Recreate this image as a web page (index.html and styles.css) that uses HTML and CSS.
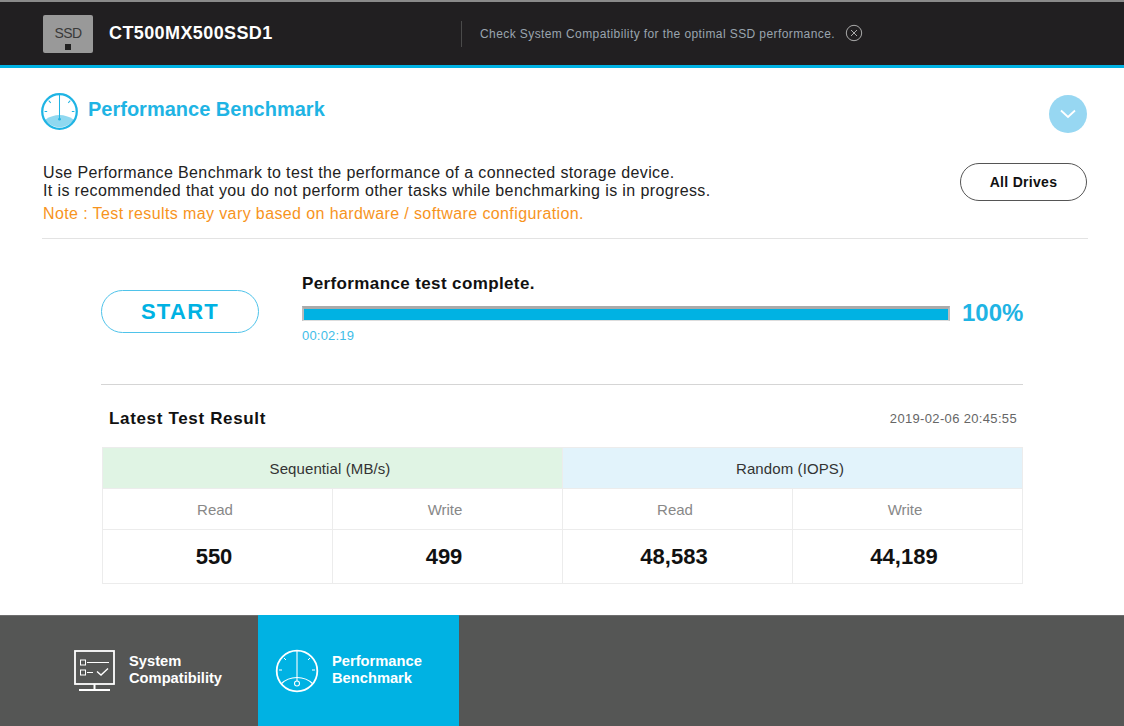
FILE: index.html
```html
<!DOCTYPE html>
<html lang="en">
<head>
<meta charset="utf-8">
<title>Performance Benchmark</title>
<link rel="stylesheet" href="styles.css">
</head>
<body>
<div class="app">
  <header class="topbar">
    <div class="ssd-badge"><span class="ssd-label">SSD</span><span class="ssd-dot"></span></div>
    <div class="model">CT500MX500SSD1</div>
    <div class="divider"></div>
    <div class="notice">Check System Compatibility for the optimal SSD performance.</div>
    <svg class="notice-close" width="18" height="18" viewBox="0 0 18 18" fill="none" stroke="#aaaaaa" stroke-width="1">
      <circle cx="9" cy="9" r="7.7"/><path d="M6 6l6 6M12 6l-6 6"/>
    </svg>
  </header>

  <main class="content">
    <section class="intro">
      <div class="title-row">
        <svg class="title-icon" width="37" height="37" viewBox="0 0 36 36" fill="none" stroke="#1fb4e4">
          <path d="M4 26Q18 17 32 26A17 17 0 0 1 4 26Z" fill="#8fd8f0" stroke="none"/>
          <circle cx="18" cy="18" r="16.800" stroke-width="2.200"/>
          <path d="M18 2v23M6 18H3.500M30 18h2.500M7.500 7.500l2 2M28.500 7.500l-2 2" stroke-width="1"/>
          <circle cx="18" cy="25.500" r="1.300" fill="#1fb4e4" stroke="none"/>
        </svg>
        <h1 class="title">Performance Benchmark</h1>
        <div class="collapse">
          <svg width="18" height="10" viewBox="0 0 18 10" fill="none" stroke="#ffffff" stroke-width="1.800"><path d="M2 1.500l7 6.500 7-6.500"/></svg>
        </div>
      </div>
      <div class="desc-row">
        <div class="desc">
          <p class="desc-line">Use Performance Benchmark to test the performance of a connected storage device.</p>
          <p class="desc-line">It is recommended that you do not perform other tasks while benchmarking is in progress.</p>
          <p class="note">Note : Test results may vary based on hardware / software configuration.</p>
        </div>
        <button class="all-drives">All Drives</button>
      </div>
    </section>

    <section class="test">
      <div class="run-row">
        <button class="start">START</button>
        <div class="progress-block">
          <div class="status">Performance test complete.</div>
          <div class="bar-row">
            <div class="bar"><div class="bar-fill"></div></div>
            <div class="percent">100%</div>
          </div>
          <div class="elapsed">00:02:19</div>
        </div>
      </div>

      <div class="result-head">
        <div class="result-title">Latest Test Result</div>
        <div class="result-date">2019-02-06 20:45:55</div>
      </div>

      <div class="grid">
        <div class="cell group seq">Sequential (MB/s)</div>
        <div class="cell group rnd">Random (IOPS)</div>
        <div class="cell label">Read</div>
        <div class="cell label">Write</div>
        <div class="cell label">Read</div>
        <div class="cell label">Write</div>
        <div class="cell value">550</div>
        <div class="cell value">499</div>
        <div class="cell value">48,583</div>
        <div class="cell value">44,189</div>
      </div>
    </section>
  </main>

  <footer class="tabs">
    <div class="tab tab-system">
      <svg class="tab-icon-sys" width="42" height="42" viewBox="0 0 42 42" fill="none" stroke="#ffffff">
        <rect x="1" y="1" width="39" height="33" stroke-width="1.800"/>
        <rect x="6.500" y="10" width="5" height="5" stroke-width="1"/>
        <rect x="6.500" y="20" width="5" height="5" stroke-width="1"/>
        <path d="M13 12.500h22M13 22.500h6" stroke-width="1"/>
        <path d="M23 21.500l4 3.500 7-6.500" stroke-width="1.400"/>
        <path d="M20.500 34v5M5 40h31" stroke-width="2"/>
      </svg>
      <div class="tab-text">System<br>Compatibility</div>
    </div>
    <div class="tab tab-active">
      <svg class="tab-icon-perf" width="44" height="44" viewBox="0 0 44 44" fill="none" stroke="#ffffff">
        <circle cx="22" cy="22" r="20.300" stroke-width="1.800"/>
        <path d="M22 2v30" stroke-width="1.100"/>
        <path d="M4 21h3M37 21h3M9 9l2 2M35 9l-2 2" stroke-width="1"/>
        <path d="M6 35C10.500 30.500 16 28.500 22 28.500S33.500 30.500 38 35" stroke-width="1.200"/>
        <circle cx="22" cy="34.500" r="2.500" stroke-width="1.100"/>
      </svg>
      <div class="tab-text">Performance<br>Benchmark</div>
    </div>
  </footer>
</div>
</body>
</html>
```
FILE: styles.css
```css
* { box-sizing: border-box; }
html, body { margin: 0; padding: 0; background: #ffffff; }
body { font-family: "Liberation Sans", Arial, sans-serif; color: #111111; }
p, h1 { margin: 0; }
button { font-family: inherit; background: #ffffff; padding: 0; }

.app { width: 1124px; height: 726px; display: flex; flex-direction: column; overflow: hidden; }

.topbar {
  height: 68px; flex: none; display: flex; align-items: center;
  background: #211f21; border-top: 2px solid #8a8a8a; border-bottom: 3px solid #00b2e3;
  padding: 0 0 0 43px;
}
.ssd-badge {
  width: 50px; height: 38px; background: #999999; border-radius: 2px;
  display: flex; flex-direction: column; align-items: center; flex: none;
}
.ssd-label { font-size: 14px; color: #3a3a3a; margin-top: 11px; line-height: 14px; letter-spacing: -0.6px; }
.ssd-dot { width: 6px; height: 6px; background: #222222; margin-top: 4px; }
.model { font-size: 18px; font-weight: bold; color: #ffffff; margin-left: 16px; width: 352px; letter-spacing: 0.4px; }
.divider { width: 1px; height: 26px; background: #4a4a4a; flex: none; }
.notice { font-size: 12px; color: #9aa4ae; margin-left: 18px; letter-spacing: 0.41px; margin-top: 1px; }
.notice-close { margin-left: 10px; flex: none; margin-top: -1px; }

.content { flex: 1; display: flex; flex-direction: column; padding: 0 36px 0 42px; }

.intro { height: 171px; border-bottom: 1px solid #e3e3e3; display: flex; flex-direction: column; }
.title-row { display: flex; align-items: center; padding-top: 24px; height: 62px; }
.title-icon { flex: none; margin-left: -1px; }
.title { font-size: 20px; font-weight: bold; color: #1fb4e4; margin-left: 10px; flex: 1; margin-top: -4px; }
.collapse {
  width: 38px; height: 38px; border-radius: 50%; background: #97d7f2; flex: none; margin-right: 1px; margin-top: 5px;
  display: flex; align-items: center; justify-content: center;
}
.desc-row { display: flex; justify-content: space-between; padding: 34px 0 0 1px; }
.desc-line { font-size: 16px; line-height: 18px; color: #222222; letter-spacing: 0.38px; }
.note { font-size: 16px; line-height: 18px; color: #f7941d; margin-top: 5px; letter-spacing: 0.39px; }
.all-drives {
  width: 127px; height: 38px; border: 1.500px solid #555555; border-radius: 19px; margin: -1px 1px 0 0;
  font-size: 14px; font-weight: bold; color: #111111; letter-spacing: 0.3px;
}

.test { padding: 0 65px 0 59px; display: flex; flex-direction: column; }
.run-row { display: flex; height: 146px; border-bottom: 1px solid #d5d5d5; }
.start {
  width: 158px; height: 43px; border: 1.500px solid #4fc3ea; border-radius: 22px; margin-top: 51px; flex: none;
  font-size: 22px; font-weight: bold; color: #00b2e3; letter-spacing: 1.300px;
}
.progress-block { margin-left: 43px; flex: 1; min-width: 0; }
.status { font-size: 17px; font-weight: bold; color: #111111; margin-top: 36px; line-height: 18px; letter-spacing: 0.38px; }
.bar-row { display: flex; align-items: center; margin-top: 13px; }
.bar { width: 648px; height: 15px; background: #e4e4e4; border: 2px solid #bcbcbc; border-top: 3px solid #aaaaaa; border-bottom: 1px solid #dddddd; flex: none; }
.bar-fill { height: 100%; background: #00b2e3; }
.percent { font-size: 24px; font-weight: bold; color: #1fb4e4; margin: -2px 0 0 12px; line-height: 16px; }
.elapsed { font-size: 13px; color: #3fbde8; margin-top: 8px; line-height: 14px; letter-spacing: 0.2px; }

.result-head { display: flex; justify-content: space-between; align-items: center; height: 62px; padding: 4px 6px 0 8px; }
.result-title { font-size: 17px; font-weight: bold; color: #111111; letter-spacing: 0.66px; margin-top: 1px; }
.result-date { font-size: 13px; color: #666666; letter-spacing: 0.34px; }

.grid {
  display: grid; grid-template-columns: repeat(4, 1fr); grid-template-rows: 41px 41px 54px;
  border-top: 1px solid #ececec; border-left: 1px solid #ececec; margin-left: 1px;
}
.cell {
  display: flex; align-items: center; justify-content: center; padding-right: 5px;
  border-right: 1px solid #ececec; border-bottom: 1px solid #ececec;
}
.group { grid-column: span 2; font-size: 15px; color: #333333; letter-spacing: 0.1px; }
.seq { background: #e0f4e4; }
.rnd { background: #e2f3fb; }
.label { font-size: 15px; color: #888888; }
.value { font-size: 22px; font-weight: bold; color: #111111; padding-right: 7px; }

.tabs { height: 111px; flex: none; background: #555655; display: flex; border-top: 1px solid #6e6e6e; }
.tab { display: flex; align-items: center; color: #ffffff; font-size: 14.700px; font-weight: bold; line-height: 17px; }
.tab-system { width: 258px; padding: 0 0 0 74px; }
.tab-active { width: 201px; background: #00b2e3; padding: 0 0 0 17px; margin-top: -1px; }
.tab-icon-sys { flex: none; }
.tab-icon-perf { flex: none; }
.tab-system .tab-text { margin-left: 13px; margin-top: -3px; }
.tab-active .tab-text { margin-left: 13px; margin-top: -2px; }
```
